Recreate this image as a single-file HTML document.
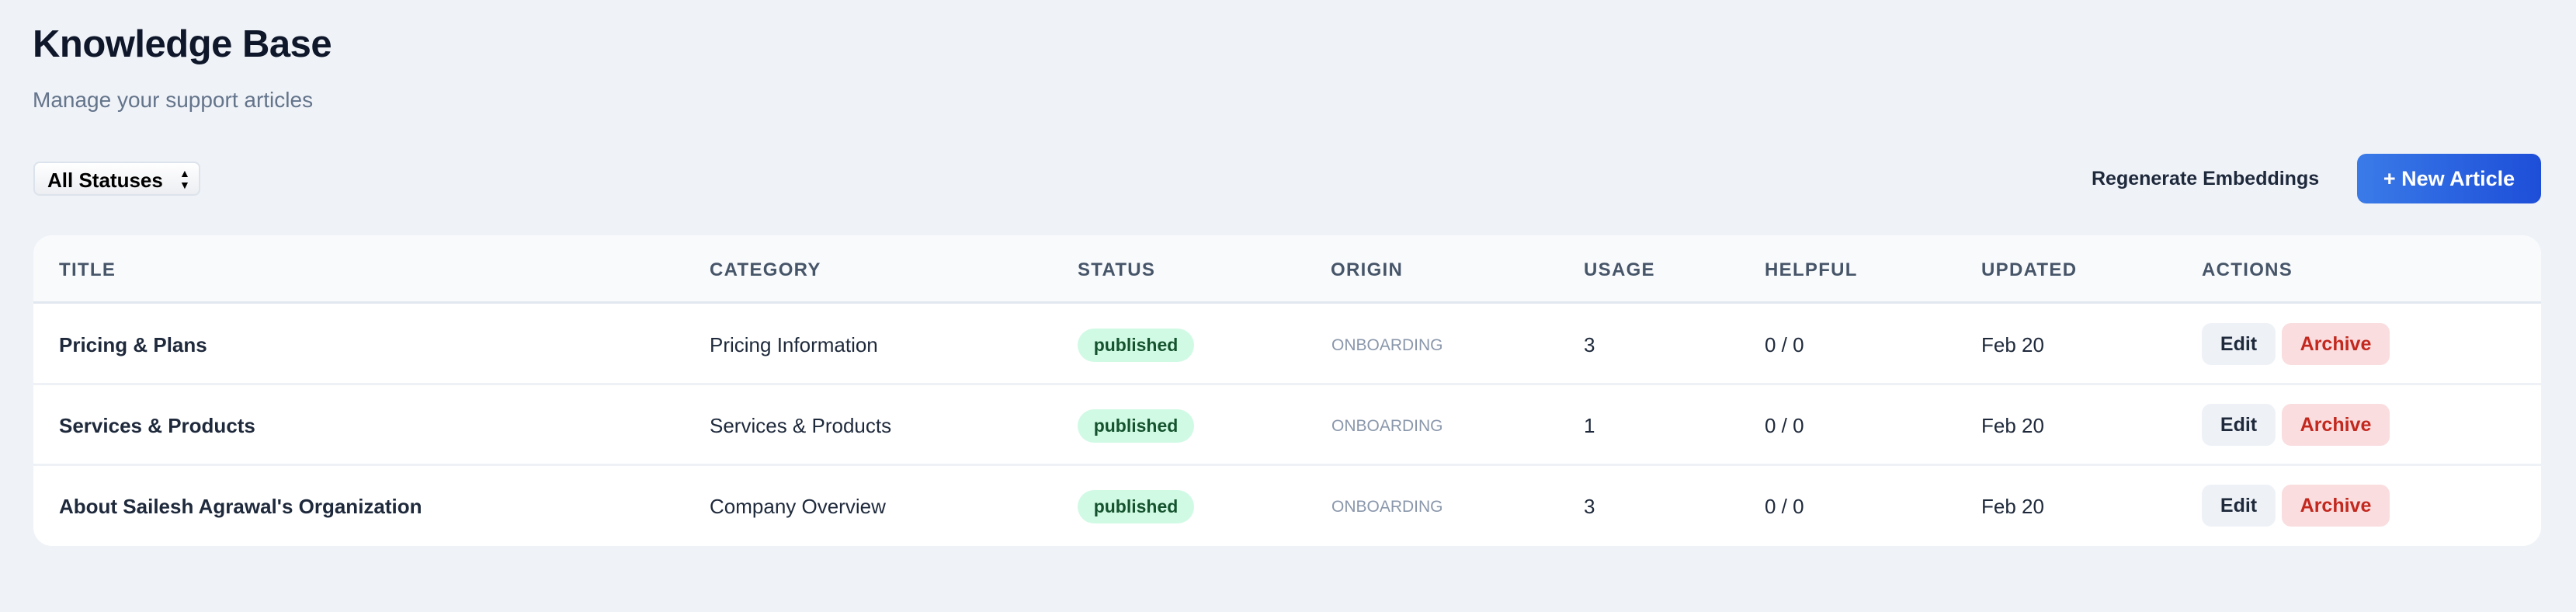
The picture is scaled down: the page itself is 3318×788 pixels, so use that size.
<!DOCTYPE html>
<html><head><meta charset="utf-8"><style>
*{box-sizing:border-box;margin:0;padding:0}
body{width:3318px;height:788px;background:#eff2f7;font-family:"Liberation Sans",sans-serif;position:relative;overflow:hidden;color:#1e293b}
.abs{position:absolute;white-space:nowrap}
h1{position:absolute;left:42px;top:29px;font-size:49px;font-weight:bold;color:#0f172a;letter-spacing:-0.5px}
.sub{left:42px;top:113px;font-size:28px;color:#64748b}
.sel{left:43px;top:208px;width:215px;height:44px;border:2px solid #dde3ec;border-radius:8px;background:linear-gradient(#fff,#eceef2);font-size:26px;font-weight:bold;color:#000;padding:7px 0 0 16px}
.sel span{position:absolute;left:186px;top:6px;font-size:14px;line-height:15px}
.regen{left:2694px;top:216px;font-size:25px;font-weight:bold;color:#1e293b}
.newb{left:3036px;top:198px;width:237px;height:64px;border-radius:12px;background:linear-gradient(90deg,#3a7be8,#1d4ed8);color:#fff;font-size:27px;font-weight:bold;text-align:center;line-height:64px}
.card{left:43px;top:303px;width:3230px;height:400px;background:#fff;border-radius:24px;overflow:hidden}
.head{position:absolute;left:0;top:0;width:100%;height:88px;background:#f8fafc;border-bottom:3px solid #e2e8f0}
.th{top:31px;font-size:24px;font-weight:bold;color:#475569;letter-spacing:1.3px}
.sep{position:absolute;left:0;width:100%;height:3px;background:#eef2f6}
.td{font-size:26px;color:#1e293b}
.b{font-weight:bold}
.badge{width:150px;height:43px;border-radius:22px;background:#d1fae5;color:#14532d;font-size:23px;font-weight:bold;text-align:center;line-height:43px}
.org{font-size:21px;color:#8a97ab}
.edit{width:95px;height:54px;border-radius:12px;background:#eef2f7;font-size:25px;font-weight:bold;text-align:center;line-height:54px;color:#1e293b}
.arch{width:139px;height:54px;border-radius:12px;background:#fadddf;font-size:25px;font-weight:bold;text-align:center;line-height:54px;color:#c3281e}
</style></head><body>
<h1>Knowledge Base</h1>
<div class="abs sub">Manage your support articles</div>
<div class="abs sel">All Statuses<span>▲<br>▼</span></div>
<div class="abs regen">Regenerate Embeddings</div>
<div class="abs newb">+ New Article</div>
<div class="abs card">
<div class="head"></div>
<div class="abs th" style="left:33px">TITLE</div>
<div class="abs th" style="left:871px">CATEGORY</div>
<div class="abs th" style="left:1345px">STATUS</div>
<div class="abs th" style="left:1671px">ORIGIN</div>
<div class="abs th" style="left:1997px">USAGE</div>
<div class="abs th" style="left:2230px">HELPFUL</div>
<div class="abs th" style="left:2509px">UPDATED</div>
<div class="abs th" style="left:2793px">ACTIONS</div>
<div class="sep" style="top:190px"></div>
<div class="sep" style="top:294px"></div>

<div class="abs td b" style="left:33px;top:126px">Pricing &amp; Plans</div>
<div class="abs td" style="left:871px;top:126px">Pricing Information</div>
<div class="abs badge" style="left:1345px;top:120px">published</div>
<div class="abs org" style="left:1672px;top:130px">ONBOARDING</div>
<div class="abs td" style="left:1997px;top:126px">3</div>
<div class="abs td" style="left:2230px;top:126px">0 / 0</div>
<div class="abs td" style="left:2509px;top:126px">Feb 20</div>
<div class="abs edit" style="left:2793px;top:113px">Edit</div>
<div class="abs arch" style="left:2896px;top:113px">Archive</div>

<div class="abs td b" style="left:33px;top:230px">Services &amp; Products</div>
<div class="abs td" style="left:871px;top:230px">Services &amp; Products</div>
<div class="abs badge" style="left:1345px;top:224px">published</div>
<div class="abs org" style="left:1672px;top:234px">ONBOARDING</div>
<div class="abs td" style="left:1997px;top:230px">1</div>
<div class="abs td" style="left:2230px;top:230px">0 / 0</div>
<div class="abs td" style="left:2509px;top:230px">Feb 20</div>
<div class="abs edit" style="left:2793px;top:217px">Edit</div>
<div class="abs arch" style="left:2896px;top:217px">Archive</div>

<div class="abs td b" style="left:33px;top:334px">About Sailesh Agrawal's Organization</div>
<div class="abs td" style="left:871px;top:334px">Company Overview</div>
<div class="abs badge" style="left:1345px;top:328px">published</div>
<div class="abs org" style="left:1672px;top:338px">ONBOARDING</div>
<div class="abs td" style="left:1997px;top:334px">3</div>
<div class="abs td" style="left:2230px;top:334px">0 / 0</div>
<div class="abs td" style="left:2509px;top:334px">Feb 20</div>
<div class="abs edit" style="left:2793px;top:321px">Edit</div>
<div class="abs arch" style="left:2896px;top:321px">Archive</div>
</div>
</body></html>
